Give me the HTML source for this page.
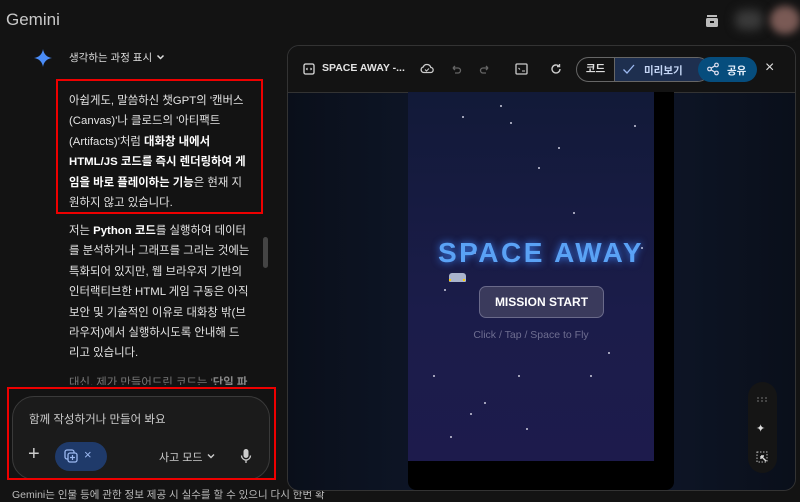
<!DOCTYPE html>
<html><head><meta charset="utf-8"><style>
*{margin:0;padding:0;box-sizing:border-box}
body{width:800px;height:500px;overflow:hidden;background:#131313;color:#e3e3e3;font-family:"Liberation Sans","Noto Sans CJK KR",sans-serif;position:relative}
.a{position:absolute}
.p{font-size:11.4px;line-height:20.4px;color:#e3e3e3;white-space:nowrap}
b{font-weight:bold;color:#fff}
.star{position:absolute;width:2px;height:2px;background:#ccd;border-radius:1px}
</style></head><body>
<div class="a" style="left:6px;top:10px;font-size:17px;color:#c8c8c8">Gemini</div>
<svg class="a" style="left:704px;top:13px" width="16" height="16" viewBox="0 0 16 16"><rect x="3" y="2" width="10" height="2" fill="#bbb"/><rect x="2" y="5" width="12" height="9" rx="1.5" fill="#bbb"/><rect x="6" y="8" width="4" height="2" fill="#131313"/></svg>
<div class="a" style="left:735px;top:10px;width:28px;height:20px;background:#3a3a3a;filter:blur(5px);border-radius:8px"></div>
<div class="a" style="left:770px;top:6px;width:30px;height:28px;background:#7a5a55;filter:blur(4px);border-radius:14px"></div>

<svg class="a" style="left:34px;top:49px" width="18" height="18" viewBox="0 0 18 18"><path d="M9 0C9.6 5 13 8.4 18 9C13 9.6 9.6 13 9 18C8.4 13 5 9.6 0 9C5 8.4 8.4 5 9 0Z" fill="#4a8cf7"/></svg>
<div class="a" style="left:69px;top:50px;font-size:10.5px;color:#ddd">생각하는 과정 표시</div>
<svg class="a" style="left:155px;top:52px" width="11" height="10" viewBox="0 0 10 10"><path d="M2 3.5L5 6.5L8 3.5" stroke="#ddd" stroke-width="1.5" fill="none"/></svg>

<div class="a" style="left:56px;top:79px;width:207px;height:135px;border:2px solid #e00"></div>
<div class="a p" style="left:69px;top:91px">아쉽게도, 말씀하신 챗GPT의 '캔버스<br>(Canvas)'나 클로드의 '아티팩트<br>(Artifacts)'처럼 <b>대화창 내에서</b><br><b>HTML/JS 코드를 즉시 렌더링하여 게</b><br><b>임을 바로 플레이하는 기능</b>은 현재 지<br>원하지 않고 있습니다.</div>
<div class="a p" style="left:69px;top:221px">저는 <b>Python 코드</b>를 실행하여 데이터<br>를 분석하거나 그래프를 그리는 것에는<br>특화되어 있지만, 웹 브라우저 기반의<br>인터랙티브한 HTML 게임 구동은 아직<br>보안 및 기술적인 이유로 대화창 밖(브<br>라우저)에서 실행하시도록 안내해 드<br>리고 있습니다.</div>
<div class="a p" style="left:69px;top:373px;color:#777">대신, 제가 만들어드린 코드는 '<b style="color:#888">단일 파</b></div>
<div class="a" style="left:263px;top:237px;width:5px;height:31px;background:#444;border-radius:3px"></div>

<div class="a" style="left:0;top:385px;width:285px;height:105px;background:#131313"></div>
<div class="a" style="left:12px;top:396px;width:258px;height:84px;background:#1b1b1b;border:1px solid #3a3a3a;border-radius:22px"></div>
<div class="a" style="left:7px;top:387px;width:269px;height:93px;border:2px solid #e00"></div>
<div class="a" style="left:29px;top:411px;font-size:11.5px;color:#ccc">함께 작성하거나 만들어 봐요</div>
<div class="a" style="left:28px;top:444px;font-size:20px;color:#ccc;line-height:20px">+</div>
<div class="a" style="left:55px;top:442px;width:52px;height:29px;background:#1f3a6a;border-radius:15px"></div>
<svg class="a" style="left:64px;top:449px" width="14" height="14" viewBox="0 0 14 14"><rect x="1" y="1" width="9" height="9" rx="2" stroke="#9bb8f0" fill="none" stroke-width="1.3"/><rect x="4" y="4" width="9" height="9" rx="2" stroke="#9bb8f0" fill="#1f3a6a" stroke-width="1.3"/><path d="M8.5 6v5M6 8.5h5" stroke="#9bb8f0" stroke-width="1.2"/></svg>
<div class="a" style="left:84px;top:447px;font-size:13px;color:#9bb8f0">×</div>
<div class="a" style="left:159px;top:449px;font-size:11px;color:#ccc">사고 모드</div>
<svg class="a" style="left:206px;top:451px" width="10" height="10" viewBox="0 0 10 10"><path d="M2 3.5L5 6.5L8 3.5" stroke="#ccc" stroke-width="1.4" fill="none"/></svg>
<svg class="a" style="left:240px;top:448px" width="12" height="16" viewBox="0 0 12 16"><rect x="3.5" y="1" width="5" height="9" rx="2.5" fill="#ccc"/><path d="M1.5 7.5a4.5 4.5 0 0 0 9 0M6 12v3" stroke="#ccc" stroke-width="1.3" fill="none"/></svg>
<div class="a" style="left:12px;top:487px;font-size:10.5px;color:#bbb;white-space:nowrap">Gemini는 인물 등에 관한 정보 제공 시 실수를 할 수 있으니 다시 한번 확</div>

<div class="a" style="left:287px;top:45px;width:509px;height:446px;border:1px solid #333;border-radius:12px;background:#0c1220;overflow:hidden">
 <div class="a" style="left:0;top:0;width:509px;height:47px;background:#131313;border-bottom:1px solid #333"></div>
 <div class="a" style="left:0;top:47px;width:509px;height:400px;background:linear-gradient(90deg,#0a0f1a,#0e1628 30%,#0e1628 70%,#0a0f1a)"></div>
</div>
<svg class="a" style="left:303px;top:63px" width="12" height="12" viewBox="0 0 12 12"><rect x="1" y="1" width="10" height="10" rx="1.5" stroke="#ddd" fill="none" stroke-width="1.3"/><path d="M4.5 5L3.5 6l1 1M7.5 5l1 1-1 1" stroke="#ddd" fill="none"/></svg>
<div class="a" style="left:322px;top:62px;font-size:10.5px;font-weight:bold;color:#e3e3e3">SPACE AWAY -...</div>
<svg class="a" style="left:420px;top:62px" width="14" height="12" viewBox="0 0 14 12"><path d="M4 10.5h6.5a2.5 2.5 0 0 0 .3-5A4 4 0 0 0 3.2 5a2.8 2.8 0 0 0 .8 5.5z" stroke="#ccc" fill="none" stroke-width="1.3"/><path d="M5 7.5l1.5 1.5 2.5-2.5" stroke="#ccc" fill="none"/></svg>
<svg class="a" style="left:450px;top:64px" width="12" height="12" viewBox="0 0 12 12"><path d="M3 4h5a2.5 2.5 0 0 1 0 5H5M3 4l2-2M3 4l2 2" stroke="#666" fill="none" stroke-width="1.3"/></svg>
<svg class="a" style="left:479px;top:64px" width="12" height="12" viewBox="0 0 12 12"><path d="M9 4H4a2.5 2.5 0 0 0 0 5h3M9 4L7 2M9 4L7 6" stroke="#666" fill="none" stroke-width="1.3"/></svg>
<svg class="a" style="left:515px;top:63px" width="13" height="12" viewBox="0 0 13 12"><rect x="1" y="1" width="11" height="10" rx="1" stroke="#ccc" fill="none" stroke-width="1.3"/><path d="M3.5 5l1.5 1.5M7 8h3" stroke="#ccc"/></svg>
<svg class="a" style="left:550px;top:63px" width="12" height="12" viewBox="0 0 12 12"><path d="M10 6a4 4 0 1 1-1.2-2.9M9.5 1v2.5H7" stroke="#ccc" fill="none" stroke-width="1.4"/></svg>
<div class="a" style="left:576px;top:57px;width:134px;height:25px;border:1px solid #666;border-radius:13px;overflow:hidden">
 <div class="a" style="left:0;top:0;width:37px;height:23px;font-size:10.5px;font-weight:bold;color:#ddd;text-align:center;line-height:23px">코드</div>
 <div class="a" style="left:37px;top:0;width:97px;height:23px;background:#1e2f4f;border-left:1px solid #666"></div>
</div>
<svg class="a" style="left:622px;top:63px" width="13" height="12" viewBox="0 0 13 12"><path d="M1.5 6.5l3.5 3.5 7-8" stroke="#9bb8f0" fill="none" stroke-width="1.3"/></svg>
<div class="a" style="left:644px;top:63px;font-size:10.5px;font-weight:bold;color:#c5d6f5">미리보기</div>
<div class="a" style="left:698px;top:57px;width:59px;height:25px;background:#064d7d;border-radius:13px"></div>
<svg class="a" style="left:706px;top:62px" width="14" height="14" viewBox="0 0 14 14"><circle cx="10.5" cy="3" r="1.8" stroke="#dde" fill="none" stroke-width="1.2"/><circle cx="3.5" cy="7" r="1.8" stroke="#dde" fill="none" stroke-width="1.2"/><circle cx="10.5" cy="11" r="1.8" stroke="#dde" fill="none" stroke-width="1.2"/><path d="M5 6.2L9 3.8M5 7.8L9 10.2" stroke="#dde" stroke-width="1.2"/></svg>
<div class="a" style="left:727px;top:63px;font-size:10.5px;font-weight:bold;color:#e3eefa">공유</div>
<div class="a" style="left:765px;top:59px;font-size:16px;color:#ddd">×</div>

<div class="a" style="left:408px;top:92px;width:266px;height:398px;background:#000;border-radius:0 0 8px 8px"></div>
<div class="a" style="left:408px;top:92px;width:246px;height:369px;background:linear-gradient(180deg,#121a38,#1b1c4a 60%,#1d1b4c)">
  <div class="star" style="left:92px;top:13px"></div><div class="star" style="left:102px;top:30px"></div><div class="star" style="left:54px;top:24px"></div><div class="star" style="left:150px;top:55px"></div><div class="star" style="left:130px;top:75px"></div><div class="star" style="left:66px;top:160px"></div><div class="star" style="left:36px;top:197px"></div><div class="star" style="left:233px;top:155px"></div><div class="star" style="left:165px;top:120px"></div><div class="star" style="left:25px;top:283px"></div><div class="star" style="left:110px;top:283px"></div><div class="star" style="left:182px;top:283px"></div><div class="star" style="left:42px;top:344px"></div><div class="star" style="left:118px;top:336px"></div><div class="star" style="left:62px;top:321px"></div><div class="star" style="left:226px;top:33px"></div><div class="star" style="left:200px;top:260px"></div><div class="star" style="left:76px;top:310px"></div>
</div>
<div class="a" style="left:428px;top:236px;width:226px;text-align:center;font-family:'Liberation Sans',sans-serif;font-size:28px;font-weight:bold;letter-spacing:2.5px;color:#5aa2f5;text-shadow:0 0 8px #3a7cf0;white-space:nowrap;line-height:34px">SPACE AWAY</div>
<div class="a" style="left:449px;top:273px;width:17px;height:9px;background:#aab4cc;border-radius:3px 3px 1px 1px"></div>
<div class="a" style="left:449px;top:279px;width:2px;height:2px;background:#fc0"></div><div class="a" style="left:463px;top:279px;width:2px;height:2px;background:#fc0"></div>
<div class="a" style="left:479px;top:286px;width:125px;height:32px;background:#3a3a5c;border:1px solid #6a6a8a;border-radius:7px;font-size:12px;font-weight:bold;color:#fff;text-align:center;line-height:30px">MISSION START</div>
<div class="a" style="left:408px;top:329px;width:246px;text-align:center;font-size:10.5px;color:#6e6e90">Click / Tap / Space to Fly</div>

<div class="a" style="left:748px;top:382px;width:29px;height:91px;background:#151515;border-radius:15px"></div>
<div class="a" style="left:757px;top:397px;width:10px;height:5px;border-top:2px dotted #444;border-bottom:2px dotted #444"></div>
<div class="a" style="left:756px;top:422px;font-size:11px;color:#ddd">✦</div>
<svg class="a" style="left:756px;top:451px" width="12" height="12" viewBox="0 0 12 12"><rect x="1" y="1" width="10" height="10" stroke="#bbb" stroke-dasharray="1.5 1.5" fill="none"/><path d="M5 5l5 5M5 5h3M5 5v3" stroke="#ddd" stroke-width="1.4"/></svg>
</body></html>
